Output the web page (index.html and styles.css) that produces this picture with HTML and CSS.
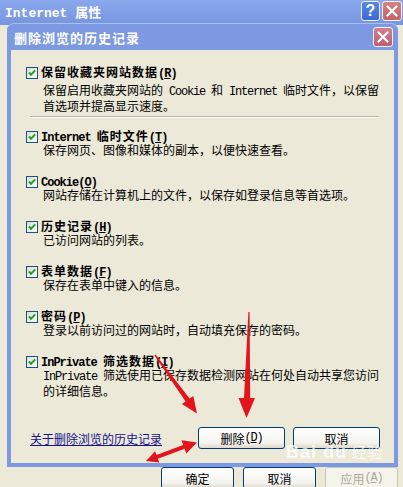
FILE: index.html
```html
<!DOCTYPE html>
<html lang="zh-CN">

<head>
    <meta charset="UTF-8">
    <meta name="viewport" content="width=device-width, initial-scale=1.0">
    <link rel="stylesheet" href="styles.css">
    <title>Internet 属性</title>
</head>

<body>

    <div class="barra">
        <span class="titulo"><span class="en">Internet </span>属性</span>
        <div class="controles">
            <span class="ayuda">?</span>
            <span class="cerrar">
                <svg width="12" height="12" viewBox="0 0 12 12"><path d="M1.5 1.5 L10.5 10.5 M10.5 1.5 L1.5 10.5" stroke="#fff" stroke-width="2.2" stroke-linecap="round"/></svg>
            </span>
        </div>
    </div>

    <div class="cuerpo">
        <div class="dialogo">
            <div class="dialogo-barra">
                <span>删除浏览的历史记录</span>
                <span class="cerrar rojo">
                    <svg width="12" height="12" viewBox="0 0 12 12"><path d="M1.5 1.5 L10.5 10.5 M10.5 1.5 L1.5 10.5" stroke="#fff" stroke-width="2.2" stroke-linecap="round"/></svg>
                </span>
            </div>

            <div class="panel">
                <div class="opcion primera">
                    <div class="fila"><span class="casilla"></span><span class="nombre">保留收藏夹网站数据<span class="en">(<u>R</u>)</span></span></div>
                    <div class="texto">保留启用收藏夹网站的<span class="en"> Cookie </span>和<span class="en"> Internet </span>临时文件，以保留<br>首选项并提高显示速度。</div>
                </div>
                <div class="linea"></div>

                <div class="opcion">
                    <div class="fila"><span class="casilla"></span><span class="nombre"><span class="en">Internet </span>临时文件<span class="en">(<u>T</u>)</span></span></div>
                    <div class="texto">保存网页、图像和媒体的副本，以便快速查看。</div>
                </div>

                <div class="opcion">
                    <div class="fila"><span class="casilla"></span><span class="nombre"><span class="en">Cookie(<u>O</u>)</span></span></div>
                    <div class="texto">网站存储在计算机上的文件，以保存如登录信息等首选项。</div>
                </div>

                <div class="opcion">
                    <div class="fila"><span class="casilla"></span><span class="nombre">历史记录<span class="en">(<u>H</u>)</span></span></div>
                    <div class="texto">已访问网站的列表。</div>
                </div>

                <div class="opcion">
                    <div class="fila"><span class="casilla"></span><span class="nombre">表单数据<span class="en">(<u>F</u>)</span></span></div>
                    <div class="texto">保存在表单中键入的信息。</div>
                </div>

                <div class="opcion">
                    <div class="fila"><span class="casilla"></span><span class="nombre">密码<span class="en">(<u>P</u>)</span></span></div>
                    <div class="texto">登录以前访问过的网站时，自动填充保存的密码。</div>
                </div>

                <div class="opcion">
                    <div class="fila"><span class="casilla"></span><span class="nombre"><span class="en">InPrivate </span>筛选数据<span class="en">(<u>I</u>)</span></span></div>
                    <div class="texto"><span class="en">InPrivate </span>筛选使用已保存数据检测网站在何处自动共享您访问<br>的详细信息。</div>
                </div>

                <div class="pie">
                    <a class="enlace" href="#">关于删除浏览的历史记录</a>
                    <span class="boton">删除<span class="en">(<u>D</u>)</span></span>
                    <span class="boton">取消</span>
                </div>
            </div>
        </div>

        <div class="acciones">
            <span class="boton">确定</span>
            <span class="boton">取消</span>
            <span class="boton apagado">应用<span class="en">(<u>A</u>)</span></span>
        </div>
    </div>

    <div class="marca"><span class="bai">Bai du</span> 经验</div>

    <svg class="flechas" width="403" height="487" viewBox="0 0 403 487">
        <polygon points="155.6,354.6 189.6,398.5 193.3,395.9 197,413.5 181.9,404.1 185.6,401.5 154.4,355.4"/>
        <polygon points="248.4,312 249.6,312 250.2,398 255,398 246.5,418 238.5,398 244,398"/>
        <polygon points="146,461 155.1,451.2 156.5,454.9 183.2,445 181.5,440.3 197,442.5 186.3,453.5 184.6,448.8 157.9,458.7 159.3,462.4"/>
    </svg>

</body>
</html>
```

FILE: styles.css
```css
* {
    box-sizing: border-box;
}

html, body {
    margin: 0;
    height: 487px;
    overflow: hidden;
}

body {
    width: 403px;
    position: relative;
    background: #ece9d8;
    font-family: "Noto Sans CJK SC", sans-serif;
    font-size: 12px;
    color: #000;
}

.en {
    font-family: "Liberation Mono", monospace;
    letter-spacing: -1.2px;
}

/* barra de la ventana de fondo */
.barra {
    height: 25px;
    display: flex;
    align-items: center;
    justify-content: space-between;
    padding: 0 1px 0 5px;
    background: linear-gradient(#8aa8ec, #7695e0);
    color: #fff;
}

.titulo {
    font-size: 13px;
    font-weight: bold;
    line-height: 13px;
}

.titulo .en {
    letter-spacing: 0;
}

.controles {
    display: flex;
    gap: 2px;
    align-self: flex-start;
    margin-top: 1px;
}

.ayuda, .cerrar {
    width: 20px;
    height: 20px;
    display: flex;
    align-items: center;
    justify-content: center;
    border: 1px solid #eef2fb;
    border-radius: 3px;
}

.ayuda {
    width: 19px;
    background: linear-gradient(#5a84e4, #3e69d6);
    font-family: "Liberation Sans", sans-serif;
    font-weight: bold;
    font-size: 16px;
}

.cerrar {
    background: linear-gradient(#d48080, #c26565);
}

.cerrar.rojo {
    background: linear-gradient(#cf7f92, #bd5f74);
}

/* dialogo */
.cuerpo {
    padding: 0 5px 0 7px;
}

.dialogo {
    position: relative;
    margin-top: -2px;
    padding: 0 4px 4px;
    border-radius: 7px 7px 0 0;
    border-top: 1px solid #a9bff0;
    background: #7c99e2;
}

.dialogo-barra {
    height: 26px;
    display: flex;
    align-items: center;
    justify-content: space-between;
    padding: 0 1px 0 3px;
    color: #fff;
    font-size: 13px;
    font-weight: bold;
    letter-spacing: 1px;
    line-height: 13px;
}

.panel {
    height: 413px;
    display: flex;
    flex-direction: column;
    padding: 16px 14px 14px 15px;
    background: #ece9d8;
}

.opcion {
    margin-bottom: 19px;
}

.opcion.primera {
    margin-bottom: 0;
}

.opcion.primera .texto {
    margin-top: 4px;
}

.fila {
    height: 13px;
    display: flex;
    align-items: center;
}

.casilla {
    flex: none;
    width: 12px;
    height: 12px;
    margin-right: 3px;
    border: 1px solid #1c5180;
    background-image: url("data:image/svg+xml;utf8,<svg xmlns='http://www.w3.org/2000/svg' width='10' height='10'><path d='M2 4.5 L4 6.7 L8.2 2.4' fill='none' stroke='%2321a121' stroke-width='2'/></svg>"), linear-gradient(135deg, #dcdcd5, #fff);
}

.nombre {
    font-weight: bold;
    letter-spacing: 1px;
    line-height: 13px;
    white-space: nowrap;
}

.nombre .en {
    letter-spacing: -1px;
}

.texto {
    padding-left: 17px;
    line-height: 13px;
    white-space: nowrap;
}

.linea {
    height: 2px;
    margin: 4px 1px 12px 4px;
    border-top: 1px solid #b9b5a5;
    border-bottom: 1px solid #fff;
}

.pie {
    margin-top: auto;
    display: flex;
    align-items: center;
    gap: 8px;
}

.enlace {
    margin: 0 auto 0 4px;
    color: #14148c;
    text-decoration: underline;
    line-height: 13px;
}

.boton {
    width: 87px;
    height: 22px;
    display: flex;
    align-items: center;
    justify-content: center;
    border: 1px solid #003c74;
    border-radius: 3px;
    background: linear-gradient(#fff, #f4f3ee 75%, #dcd8ca);
    line-height: 13px;
}

.acciones {
    display: flex;
    justify-content: flex-end;
    gap: 9px;
}

.acciones .boton {
    width: 73px;
}

.boton.apagado {
    border-color: #c9c7ba;
    color: #aca899;
    background: #f5f4ea;
}

/* anotaciones */
.marca {
    position: absolute;
    left: 286px;
    top: 441px;
    color: rgba(255, 255, 255, 0.75);
    font-size: 15px;
    letter-spacing: 1px;
}

.marca .bai {
    font-family: "Liberation Sans", sans-serif;
    font-weight: bold;
    font-size: 18px;
}

.flechas {
    position: absolute;
    left: 0;
    top: 0;
    pointer-events: none;
    fill: #e4141c;
}
```
